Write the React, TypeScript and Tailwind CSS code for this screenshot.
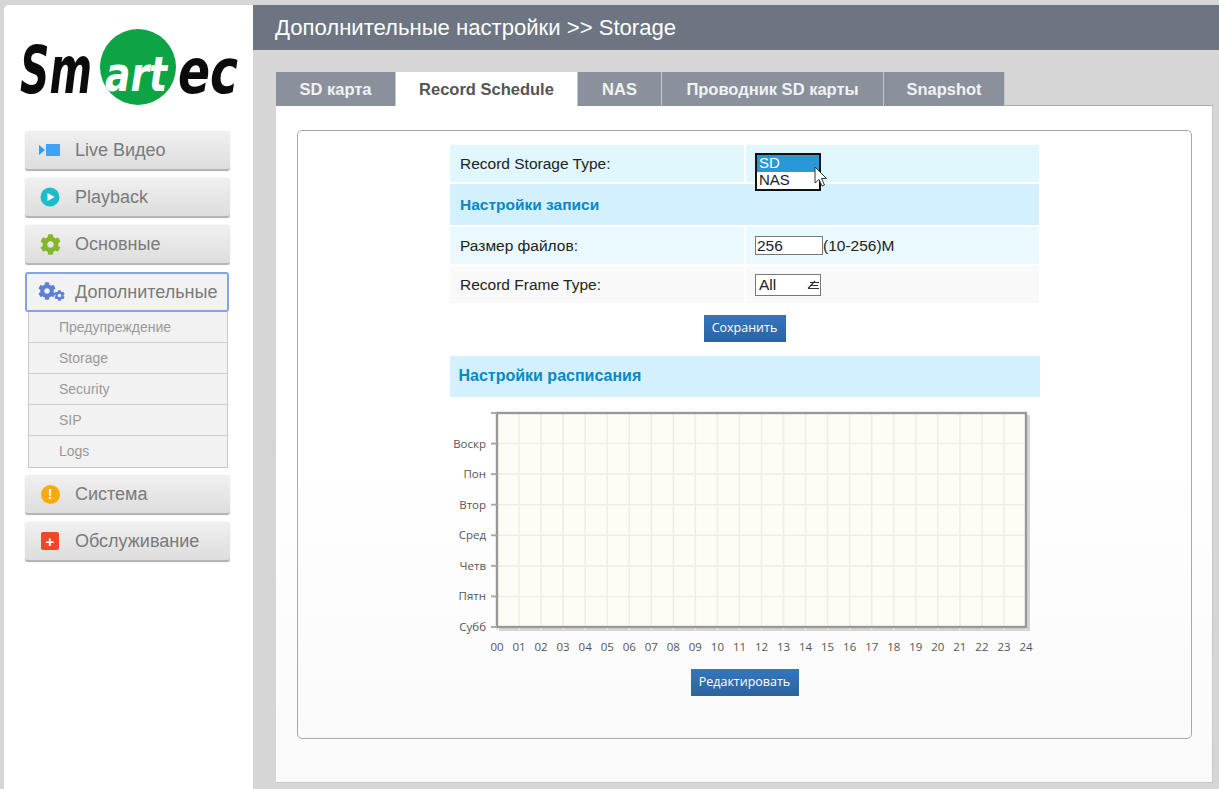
import type { ReactNode } from "react"
import { FaCog } from "react-icons/fa"

const sans = "font-['Liberation_Sans',Arial,sans-serif]"
const days = ["Воскр", "Пон", "Втор", "Сред", "Четв", "Пятн", "Субб"]
const hours = Array.from({ length: 25 }, (_, i) => String(i).padStart(2, "0"))
const tabs = [
  { label: "SD карта", width: "w-[120px]" },
  { label: "Record Schedule", width: "w-[182px]", active: true },
  { label: "NAS", width: "w-[84px]" },
  { label: "Проводник SD карты", width: "w-[222px]" },
  { label: "Snapshot", width: "w-[121px]" },
]
const subItems = ["Предупреждение", "Storage", "Security", "SIP", "Logs"]

const Logo = () => (
  <svg width="230" height="84" viewBox="0 0 230 84" className="ml-[15px] mt-[23px] block">
    <circle cx="119" cy="39" r="38" fill="#0ca444" />
    <text x="1" y="65" fontFamily="DejaVu Sans" fontWeight="700" fontStyle="italic" fontSize="66" textLength="72" lengthAdjust="spacingAndGlyphs" fill="#0b0b0b">Sm</text>
    <text x="86" y="63" fontFamily="DejaVu Sans" fontStyle="italic" fontWeight="700" fontSize="48" textLength="62" lengthAdjust="spacingAndGlyphs" fill="#fff">art</text>
    <text x="159" y="65" fontFamily="DejaVu Sans" fontWeight="700" fontStyle="italic" fontSize="62" textLength="60" lengthAdjust="spacingAndGlyphs" fill="#0b0b0b">ec</text>
  </svg>
)

const MenuButton = ({ icon, label, active }: { icon: ReactNode; label: string; active?: boolean }) => (
  <div
    className={
      active
        ? "flex h-[40px] w-[204px] items-center rounded-[3px] border-2 border-[#86a3e6] bg-[#f2f2f2]"
        : "flex h-[40px] w-[205px] items-center rounded-[3px] border-b-2 border-[#b5b5b5] bg-gradient-to-b from-[#f0f0f0] to-[#dddddd] shadow-[0_0_1px_#bbb]"
    }
  >
    <span className={`flex shrink-0 items-center justify-center ${active ? "w-[48px]" : "w-[50px]"}`}>{icon}</span>
    <span className="text-[18px] leading-none text-[#7a7a7a]">{label}</span>
  </div>
)

const Row = ({ label, bg, children }: { label: string; bg: string; children: ReactNode }) => (
  <div className="flex h-[37px] gap-[2px]">
    <div className={`flex w-[294px] items-center pl-[10px] ${bg}`}>{label}</div>
    <div className={`flex flex-1 items-center pl-[9px] ${bg}`}>{children}</div>
  </div>
)

const BlueButton = ({ label, width }: { label: string; width: string }) => (
  <div className={`mx-auto flex h-[27px] ${width} items-center justify-center bg-gradient-to-b from-[#3277c0] to-[#2d639f] font-['Open_Sans',sans-serif] text-[12.5px] text-white`}>
    {label}
  </div>
)

const Chart = () => {
  const left = 51
  const right = 580
  const top = 8
  const bottom = 222
  const stepX = (right - left) / 24
  const stepY = (bottom - top) / 7
  return (
    <svg width="598" height="256" viewBox="0 0 598 256" className="mx-auto mt-[8px] block">
      <rect x={left + 2} y={top + 2} width={right - left + 2} height={bottom - top + 2} fill="#bbb" opacity="0.6" />
      <rect x={left} y={top} width={right - left} height={bottom - top} fill="#fffcf6" />
      {hours.map((_, i) => (
        <line key={i} x1={left + i * stepX} x2={left + i * stepX} y1={top} y2={bottom + 3} stroke="#f1eee8" strokeWidth="1.6" />
      ))}
      {days.map((_, i) => (
        <line key={i} x1={left} x2={right} y1={top + (i + 1) * stepY} y2={top + (i + 1) * stepY} stroke="#f1eee8" strokeWidth="1.6" />
      ))}
      <rect x={left} y={top} width={right - left} height={bottom - top} fill="none" stroke="#999" strokeWidth="2.4" />
      <line x1={left - 6} x2={left} y1={top} y2={top} stroke="#aaa" strokeWidth="2" />
      {days.map((day, i) => {
        const y = top + (i + 1) * stepY
        return (
          <g key={day}>
            <line x1={left - 6} x2={left} y1={y} y2={y} stroke="#aaa" strokeWidth="2" />
            <text x={left - 11} y={y + 4} textAnchor="end" fontFamily="Open Sans" fontSize="11.5" fill="#555">{day}</text>
          </g>
        )
      })}
      {hours.map((hour, i) => (
        <text key={hour} x={left + i * stepX} y={246} textAnchor="middle" fontFamily="Open Sans" fontSize="11.5" fill="#555">{hour}</text>
      ))}
    </svg>
  )
}

export default function App() {
  return (
    <div className={`flex h-[789px] w-[1219px] overflow-hidden bg-[#d6d6d6] pl-[4px] pt-[5px] ${sans}`}>
      <aside className="h-[784px] w-[249px] shrink-0 rounded-tl-[5px] bg-white">
        <Logo />
        <nav className="ml-[21px] mt-[19px] flex flex-col gap-[7px]">
          <MenuButton
            label="Live Видео"
            icon={
              <svg width="24" height="14" viewBox="0 0 24 14">
                <path d="M1 2l6 5-6 5z" fill="#2f9bf0" />
                <rect x="8" y="1" width="14" height="12" fill="#3fa2f5" />
              </svg>
            }
          />
          <MenuButton
            label="Playback"
            icon={
              <svg width="20" height="20" viewBox="0 0 20 20">
                <circle cx="10" cy="10" r="9.5" fill="#1cbccb" />
                <path d="M7.5 6l7 4-7 4z" fill="#fff" />
              </svg>
            }
          />
          <MenuButton label="Основные" icon={<FaCog className="text-[21px] text-[#84b62a]" />} />
          <div className="flex flex-col">
            <MenuButton
              active
              label="Дополнительные"
              icon={
                <svg width="28" height="20" viewBox="0 0 28 20" className="ml-[1px]">
                  <foreignObject width="28" height="20">
                    <div className="relative h-[20px] w-[28px]">
                      <FaCog className="absolute left-0 top-0 text-[18px] text-[#5d80d6]" />
                      <FaCog className="absolute left-[16px] top-[8px] text-[11px] text-[#5d80d6]" />
                    </div>
                  </foreignObject>
                </svg>
              }
            />
            <div className="ml-[3px] w-[200px] border border-t-0 border-[#c9c9c9] bg-[#f2f2f2]">
              {subItems.map((item, i) => (
                <div
                  key={item}
                  className={`flex h-[31px] items-center pl-[30px] text-[14px] text-[#999] ${i < subItems.length - 1 ? "border-b border-[#cdcdcd]" : ""}`}
                >
                  {item}
                </div>
              ))}
            </div>
          </div>
          <MenuButton
            label="Система"
            icon={
              <span className="flex h-[19px] w-[19px] items-center justify-center rounded-full bg-[#fbaa0d] text-[14px] font-bold text-white">!</span>
            }
          />
          <MenuButton
            label="Обслуживание"
            icon={
              <span className="flex h-[18px] w-[18px] items-center justify-center rounded-[2px] bg-[#f4452a] text-[15px] font-bold leading-none text-white">+</span>
            }
          />
        </nav>
      </aside>

      <main className="flex min-w-0 flex-1 flex-col">
        <header className="flex h-[45px] items-center bg-[#6d7582] pl-[22px] text-[22.1px] text-white">
          Дополнительные настройки &gt;&gt; Storage
        </header>
        <div className="ml-[23px] mt-[22px] flex w-[937px]">
          {tabs.map((tab) => (
            <div
              key={tab.label}
              className={`flex h-[34px] items-center justify-center border-r border-[#c4c7cc] text-[16.5px] font-bold ${tab.width} ${tab.active ? "bg-white text-[#555]" : "bg-[#8a919d] text-[#f2f2f2]"}`}
            >
              {tab.label}
            </div>
          ))}
          <div className="h-[34px] flex-1 border-b border-[#aaa]" />
        </div>
        <section className="ml-[23px] h-[677px] w-[937px] border-b border-r border-[#c8c8c8] bg-gradient-to-b from-white from-50% to-[#fafafa] pl-[21px] pt-[24px]">
          <div className="relative h-[609px] w-[895px] rounded-[5px] border border-[#a8a8a8] pt-[14px] text-[15.5px] text-[#222]">
            <div className="mx-auto flex w-[589px] flex-col gap-[2px]">
              <Row label="Record Storage Type:" bg="bg-[#e0f7fe]">
                <span />
              </Row>
              <div className="flex h-[41px] items-center bg-[#d2f0fd] pl-[10px] text-[15.5px] font-bold text-[#0b87c4]">Настройки записи</div>
              <Row label="Размер файлов:" bg="bg-[#e9f9fe]">
                <span className="flex h-[19px] w-[68px] items-center border border-[#777] bg-white pl-[1px]">256</span>
                <span>(10-256)M</span>
              </Row>
              <Row label="Record Frame Type:" bg="bg-[#f9f9f9]">
                <span className="flex h-[22px] w-[66px] items-center justify-between border border-[#777] bg-white pl-[3px]">
                  All
                  <svg width="14" height="10" viewBox="0 0 14 10">
                    <path d="M4 2.5h9M2 8.5h11M5 5.5h7M9 1L2 8.5" stroke="#333" strokeWidth="1.2" fill="none" />
                  </svg>
                </span>
              </Row>
            </div>
            <div className="mt-[12px]">
              <BlueButton label="Сохранить" width="w-[82px]" />
            </div>
            <div className="mx-auto mt-[14px] flex h-[41px] w-[590px] items-center bg-[#d2f0fd] pb-[1px] pl-[9px] text-[16px] font-bold text-[#0b87c4]">Настройки расписания</div>
            <Chart />
            <div className="mt-[8px]">
              <BlueButton label="Редактировать" width="w-[108px]" />
            </div>

            {/* open list of the storage select */}
            <div className="absolute left-[457px] top-[22px] w-[66px] border-2 border-[#111] bg-white text-[15px] leading-[16px]">
              <div className="bg-[#2a98d8] pb-[1px] pl-[2px] text-white">SD</div>
              <div className="pb-[1px] pl-[2px] text-[#222]">NAS</div>
            </div>
            <svg width="14" height="22" viewBox="0 0 14 22" className="absolute left-[516px] top-[35px]">
              <path d="M1 1v16l4-3.5 3 6.5 2.5-1-3-6.5h5z" fill="#fff" stroke="#333" strokeWidth="1" />
            </svg>
          </div>
        </section>
      </main>
    </div>
  )
}
